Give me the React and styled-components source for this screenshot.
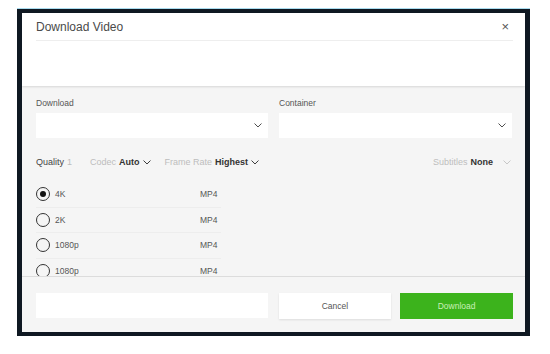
import styled, { createGlobalStyle } from 'styled-components';

const GlobalStyle = createGlobalStyle`
  html, body {
    margin: 0;
    padding: 0;
    background: #ffffff;
    font-family: "Liberation Sans", Arial, sans-serif;
  }
`;

const Page = styled.div`
  width: 550px;
  height: 354px;
  padding: 9px 0 0 17px;
  box-sizing: border-box;
`;

const Frame = styled.div`
  width: 513px;
  height: 327px;
  box-sizing: border-box;
  border: solid #0f1822;
  border-width: 4px 5px 4px 5px;
  box-shadow: 0 -1px 0 #a9dcef;
  display: flex;
  flex-direction: column;
  background: #f5f5f5;
  overflow: hidden;
`;

const Header = styled.div`
  height: 73px;
  flex: none;
  background: #ffffff;
  padding: 0 12px 0 14px;
  box-shadow: 0 1px 2px rgba(0, 0, 0, 0.12);
  position: relative;
  z-index: 1;
`;

const TitleRow = styled.div`
  height: 27px;
  display: flex;
  align-items: center;
  justify-content: space-between;
  border-bottom: 1px solid #eeeeee;
`;

const Title = styled.div`
  font-size: 12px;
  color: #4a4a4a;
`;

const Close = styled.div`
  font-size: 13px;
  color: #555;
  padding-right: 4px;
`;

const Body = styled.div`
  height: 191px;
  flex: none;
  padding: 12px 12px 0 14px;
  box-sizing: border-box;
  border-bottom: 1px solid #dcdcdc;
  overflow: hidden;
`;

const Columns = styled.div`
  display: grid;
  grid-template-columns: 232px 233px;
  gap: 11px;
`;

const Label = styled.div`
  font-size: 8.5px;
  color: #555;
  height: 15px;
  line-height: 10px;
`;

const Select = styled.div`
  height: 25px;
  background: #ffffff;
  display: flex;
  align-items: center;
  justify-content: flex-end;
  padding-right: 6px;
`;

const Options = styled.div`
  display: flex;
  align-items: center;
  height: 20px;
  margin-top: 14px;
  font-size: 9px;
`;

const Opt = styled.span`
  display: inline-flex;
  align-items: center;
  gap: 3px;
  margin-right: ${({ $mr }) => $mr || 0}px;
  margin-left: ${({ $push }) => ($push ? 'auto' : '0')};
  padding-right: ${({ $push }) => ($push ? '2px' : '0')};
`;

const Dim = styled.span`
  color: #bdbdbd;
`;

const Strong = styled.span`
  color: ${({ $plain }) => ($plain ? '#444' : '#333')};
  font-weight: ${({ $plain }) => ($plain ? 'normal' : 'bold')};
`;

const List = styled.div`
  margin-top: 10px;
`;

const Row = styled.div`
  width: 185px;
  height: 25.5px;
  display: flex;
  align-items: center;
  border-bottom: 1px solid #ededed;
  box-sizing: border-box;
  font-size: 8.5px;
  color: #555;
`;

const Radio = styled.span`
  width: 12px;
  height: 12px;
  border: 1.3px solid #333;
  border-radius: 50%;
  display: inline-flex;
  align-items: center;
  justify-content: center;
  margin-right: 5px;
  &::after {
    content: '';
    width: 6px;
    height: 6px;
    border-radius: 50%;
    background: ${({ $on }) => ($on ? '#111' : 'transparent')};
  }
`;

const Res = styled.span`
  width: 145px;
`;

const Footer = styled.div`
  flex: 1;
  display: flex;
  align-items: flex-start;
  padding: 16px 12px 0 14px;
  gap: 9px;
`;

const Field = styled.div`
  width: 232px;
  height: 25px;
  background: #ffffff;
  margin-right: 2px;
`;

const Button = styled.div`
  width: 113px;
  height: 26px;
  display: flex;
  align-items: center;
  justify-content: center;
  font-size: 8.5px;
  background: ${({ $primary }) => ($primary ? '#3cb31c' : '#ffffff')};
  color: ${({ $primary }) => ($primary ? '#c9f0b8' : '#555')};
  box-shadow: ${({ $primary }) => ($primary ? 'none' : '0 1px 2px rgba(0,0,0,0.1)')};
`;

const Spacer = styled.span`
  width: 4px;
`;

const Chevron = ({ size = 9, color = '#333', w = 1.4 }) => (
  <svg width={size} height={size * 0.6} viewBox="0 0 10 6" fill="none">
    <path d="M1 1l4 4 4-4" stroke={color} strokeWidth={w} strokeLinecap="round" strokeLinejoin="round" />
  </svg>
);

const rows = [
  { res: '4K', on: true },
  { res: '2K' },
  { res: '1080p' },
  { res: '1080p' },
];

export default function App() {
  return (
    <Page>
      <GlobalStyle />
      <Frame>
        <Header>
          <TitleRow>
            <Title>Download Video</Title>
            <Close>×</Close>
          </TitleRow>
        </Header>
        <Body>
          <Columns>
            <div>
              <Label>Download</Label>
              <Select>
                <Chevron size={8} color="#444" w={1.2} />
              </Select>
            </div>
            <div>
              <Label>Container</Label>
              <Select>
                <Chevron size={8} color="#444" w={1.2} />
              </Select>
            </div>
          </Columns>
          <Options>
            <Opt $mr={18}>
              <Strong $plain>Quality</Strong>
              <Dim>1</Dim>
            </Opt>
            <Opt $mr={14}>
              <Dim>Codec</Dim>
              <Strong>Auto</Strong>
              <Chevron size={8} w={1.2} />
            </Opt>
            <Opt>
              <Dim>Frame Rate</Dim>
              <Strong>Highest</Strong>
              <Chevron size={8} w={1.2} />
            </Opt>
            <Opt $push>
              <Dim>Subtitles</Dim>
              <Strong>None</Strong>
              <Spacer />
              <Chevron size={8} color="#bbb" w={1} />
            </Opt>
          </Options>
          <List>
            {rows.map((r, i) => (
              <Row key={i}>
                <Radio $on={r.on} />
                <Res>{r.res}</Res>
                <span>MP4</span>
              </Row>
            ))}
          </List>
        </Body>
        <Footer>
          <Field />
          <Button>Cancel</Button>
          <Button $primary>Download</Button>
        </Footer>
      </Frame>
    </Page>
  );
}
